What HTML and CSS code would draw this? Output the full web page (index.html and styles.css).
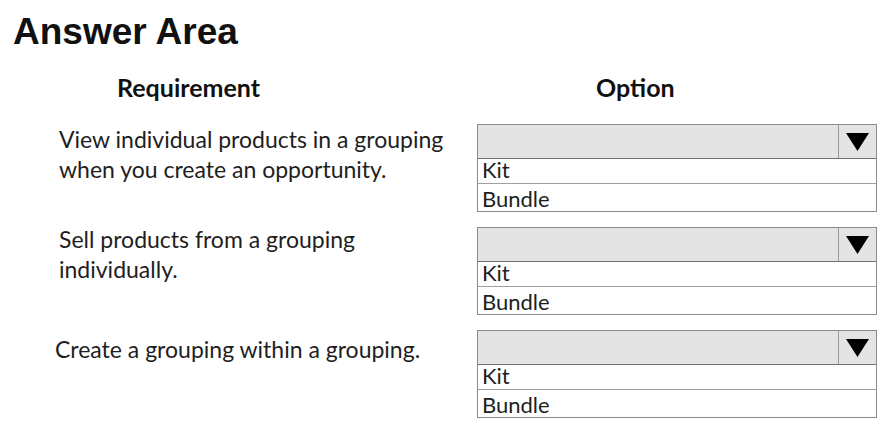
FILE: index.html
```html
<!DOCTYPE html>
<html lang="en">
<head>
<meta charset="utf-8">
<title>Answer Area</title>
<link rel="stylesheet" href="styles.css">
</head>
<body>
<div class="page">
  <h1 class="title">Answer Area</h1>
  <div class="heads">
    <div class="head head-req">Requirement</div>
    <div class="head head-opt">Option</div>
  </div>
  <div class="rows">
    <div class="row row-1">
      <div class="req">View individual products in a grouping<br>when you create an opportunity.</div>
      <div class="dropdown">
        <div class="dd-head"><span class="dd-value"></span><span class="dd-btn"><svg width="23" height="18" viewBox="0 0 23 18"><polygon points="0,0 23,0 11.5,18" fill="#000"/></svg></span></div>
        <div class="dd-item">Kit</div>
        <div class="dd-item dd-last">Bundle</div>
      </div>
    </div>
    <div class="row row-2">
      <div class="req">Sell products from a grouping<br>individually.</div>
      <div class="dropdown">
        <div class="dd-head"><span class="dd-value"></span><span class="dd-btn"><svg width="23" height="18" viewBox="0 0 23 18"><polygon points="0,0 23,0 11.5,18" fill="#000"/></svg></span></div>
        <div class="dd-item">Kit</div>
        <div class="dd-item dd-last">Bundle</div>
      </div>
    </div>
    <div class="row row-3">
      <div class="req">Create a grouping within a grouping.</div>
      <div class="dropdown">
        <div class="dd-head"><span class="dd-value"></span><span class="dd-btn"><svg width="23" height="18" viewBox="0 0 23 18"><polygon points="0,0 23,0 11.5,18" fill="#000"/></svg></span></div>
        <div class="dd-item">Kit</div>
        <div class="dd-item dd-last">Bundle</div>
      </div>
    </div>
  </div>
</div>
</body>
</html>
```
FILE: styles.css
```css
* { box-sizing: border-box; }
html, body { margin: 0; padding: 0; background: #fff; }
body { width: 884px; height: 433px; overflow: hidden; color: #1e1e1e; font-family: Lato, "Open Sans", sans-serif; }
.page { display: flex; flex-direction: column; }
.title {
  margin: 14px 0 0 13px;
  font-family: "Liberation Sans", Arial, sans-serif;
  font-weight: bold;
  font-size: 37px;
  line-height: 36px;
  color: #111;
}
.heads { display: flex; margin-top: 24px; height: 26px; }
.head { font-weight: bold; font-size: 25px; line-height: 26px; color: #111; }
.head-req { margin-left: 117px; }
.head-opt { margin-left: 336px; }
.rows { display: flex; flex-direction: column; gap: 15px; margin-top: 24px; }
.row { display: flex; height: 88px; }
.req { width: 477px; padding-left: 59px; font-size: 23px; line-height: 30px; }
.row-1 .req { padding-top: 0; }
.row-2 .req { margin-top: -3px; }
.row-3 .req { padding-top: 4px; padding-left: 55px; }
.dropdown { width: 400px; border: 1px solid #8a8a8a; display: flex; flex-direction: column; }
.dd-head { height: 34px; background: #e4e4e4; border-bottom: 1px solid #6f6f6f; display: flex; }
.dd-value { flex: 1; }
.dd-btn { width: 38px; border-left: 1px solid #9a9a9a; display: flex; align-items: center; justify-content: center; }
.dd-item { height: 25px; padding-left: 4px; font-size: 22px; line-height: 21px; border-bottom: 1px solid #a0a0a0; }
.dd-last { height: 27px; line-height: 29px; border-bottom: none; }
```
